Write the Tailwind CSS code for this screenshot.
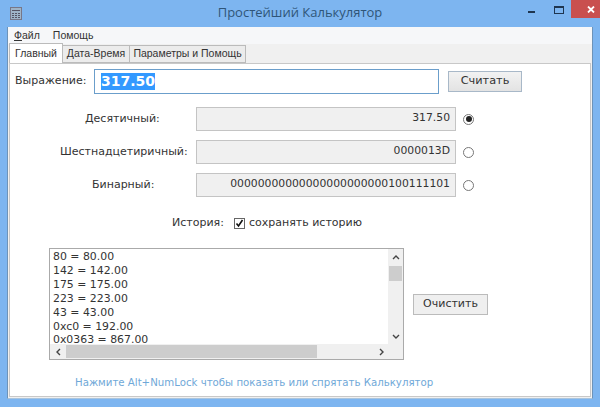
<!DOCTYPE html>
<html lang="en">
<head>
    <meta charset="UTF-8">
    <title>Простейший Калькулятор</title>
    <script src="https://cdn.jsdelivr.net/npm/@tailwindcss/browser@4"></script>
</head>
<body class="w-[600px] h-[407px] overflow-hidden bg-[#7db5f0] font-['DejaVu_Sans',sans-serif] text-[11px] text-[#333]">

    <!-- Title bar -->
    <div class="h-[27px] flex items-center relative">
        <svg class="ml-[10px] mb-[1px]" width="12" height="13" viewBox="0 0 12 13"><rect x="0.5" y="0.5" width="11" height="12" fill="#9fb4c8" stroke="#778"/><path d="M2 3h8v1H2zM2 6h2v1H2zM5 6h2v1H5zM8 6h2v1H8zM2 8h2v1H2zM5 8h2v1H5zM8 8h2v1H8zM2 10h2v1H2zM5 10h2v1H5zM8 10h2v1H8z" fill="#556"/></svg>
        <div class="flex-1 text-center text-[13px] text-[#2f5578] font-['Open_Sans',sans-serif] mr-[22px] mb-[1px]">Простейший Калькулятор</div>
        <div class="absolute top-0 left-[516px] flex items-start">
            <div class="w-[30px] h-[20px] flex justify-center"><div class="w-[7px] h-[2px] mt-[11px] bg-[#1e3550]"></div></div>
            <div class="w-[26px] h-[20px] flex justify-center"><div class="w-[10px] h-[8px] mt-[6px] border border-t-2 border-[#1e3550]"></div></div>
            <div class="w-[39px] h-[18px] bg-[#c9504f] flex items-center justify-center ml-[-1px]">
                <svg width="8" height="7" viewBox="0 0 8 7"><path d="M1 0.5L7 6.5M7 0.5L1 6.5" stroke="#fff" stroke-width="1.8"/></svg>
            </div>
        </div>
    </div>

    <!-- Window body -->
    <div class="mx-[7px] h-[372px] bg-[#f0f0f0] border border-[#6d93b8] border-t-0 border-b-[#a9c4dd] flex flex-col">
        <!-- Menu -->
        <div class="h-[17px] bg-[#f6f7f9] flex items-center gap-[13px] pl-[6px] text-[10.5px] font-['Liberation_Sans',sans-serif] shrink-0">
            <span><span class="underline">Ф</span>айл</span>
            <span>Помощь</span>
        </div>

        <!-- Tabs -->
        <div class="h-[19px] flex items-end pl-[1px] relative z-10 shrink-0 text-[10.5px] font-['Liberation_Sans',sans-serif]">
            <div class="w-[54px] h-[20px] bg-white border border-[#bbb] border-b-0 flex items-center justify-center">Главный</div>
            <div class="w-[67px] h-[18px] bg-[#ececec] border border-[#bbb] border-l-0 flex items-center justify-center">Дата-Время</div>
            <div class="w-[116px] h-[18px] bg-[#ececec] border border-[#bbb] border-l-0 flex items-center justify-center">Параметры и Помощь</div>
        </div>

        <!-- Tab page -->
        <div class="flex-1 mr-[1px] ml-[1px] mb-[1px] bg-white border border-[#c8c8c8] flex flex-col relative">
            <div class="flex items-center h-[25px] mt-[5px]">
                <span class="ml-[5px] w-[79px] text-[11px]">Выражение:</span>
                <div class="w-[345px] h-[25px] border border-[#6b9ecb] flex items-center pl-[6px] text-[14px] font-bold">
                    <span class="bg-[#3399ff] text-white h-[17px] leading-[17px]">317.50</span>
                </div>
                <div class="ml-[9px] w-[74px] h-[21px] bg-gradient-to-b from-[#f2f2f2] to-[#e3e3e3] border border-[#a8b8c8] flex items-center justify-center text-[11.3px]">Считать</div>
            </div>

            <div class="mt-[13px] flex flex-col gap-[9px]">
                <div class="flex items-center h-[24px]">
                    <span class="w-[159px] pl-[75px] whitespace-nowrap">Десятичный:</span>
                    <div class="ml-[27px] w-[260px] h-[24px] bg-[#f0f0f0] border border-[#c4c4c4] flex items-center justify-end pr-[5px] pb-[2px] text-[10.8px]">317.50</div>
                    <div class="ml-[7px] w-[11px] h-[11px] rounded-full border border-[#777] flex items-center justify-center"><div class="w-[6px] h-[6px] rounded-full bg-[#222]"></div></div>
                </div>
                <div class="flex items-center h-[24px]">
                    <span class="w-[159px] pl-[50px] whitespace-nowrap">Шестнадцетиричный:</span>
                    <div class="ml-[27px] w-[260px] h-[24px] bg-[#f0f0f0] border border-[#c4c4c4] flex items-center justify-end pr-[5px] pb-[2px] text-[10.8px]">0000013D</div>
                    <div class="ml-[7px] w-[11px] h-[11px] rounded-full border border-[#777]"></div>
                </div>
                <div class="flex items-center h-[24px]">
                    <span class="w-[159px] pl-[82px] whitespace-nowrap">Бинарный:</span>
                    <div class="ml-[27px] w-[260px] h-[24px] bg-[#f0f0f0] border border-[#c4c4c4] flex items-center justify-end pr-[5px] pb-[2px] text-[10.8px]">00000000000000000000000100111101</div>
                    <div class="ml-[7px] w-[11px] h-[11px] rounded-full border border-[#777]"></div>
                </div>
            </div>

            <div class="flex items-center h-[14px] mt-[19px]">
                <span class="ml-[162px] w-[53px]">История:</span>
                <div class="ml-[9px] w-[11px] h-[11px] border border-[#666] flex items-center justify-center">
                    <svg width="9" height="9" viewBox="0 0 9 9"><path d="M1.5 4.5L3.5 7L7.5 1" fill="none" stroke="#111" stroke-width="1.6"/></svg>
                </div>
                <span class="ml-[4px]">сохранять историю</span>
            </div>

            <div class="flex items-center mt-[18px] ml-[39px]">
                <!-- History list -->
                <div class="w-[355px] h-[112px] border border-[#aaa] relative overflow-hidden">
                    <div class="pl-[3px] pt-[1px] leading-[13.9px] text-[10.9px] text-[#333]">
                        <div>80 = 80.00</div>
                        <div>142 = 142.00</div>
                        <div>175 = 175.00</div>
                        <div>223 = 223.00</div>
                        <div>43 = 43.00</div>
                        <div>0xc0 = 192.00</div>
                        <div>0x0363 = 867.00</div>
                    </div>
                    <!-- Scrollbars -->
                    <div class="absolute top-0 right-0 w-[15px] h-[96px] bg-[#f0f0f0] flex flex-col items-center">
                        <svg class="mt-[6px]" width="8" height="5" viewBox="0 0 8 5"><path d="M1 4L4 1L7 4" fill="none" stroke="#444" stroke-width="1.4"/></svg>
                        <div class="w-[13px] h-[15px] mt-[6px] bg-[#cdcdcd]"></div>
                        <svg class="mt-auto mb-[6px]" width="8" height="5" viewBox="0 0 8 5"><path d="M1 1L4 4L7 1" fill="none" stroke="#444" stroke-width="1.4"/></svg>
                    </div>
                    <div class="absolute bottom-0 left-0 right-0 h-[15px] bg-[#f0f0f0] flex items-center">
                        <svg class="ml-[6px]" width="5" height="8" viewBox="0 0 5 8"><path d="M4 1L1 4L4 7" fill="none" stroke="#444" stroke-width="1.4"/></svg>
                        <div class="w-[251px] h-[13px] ml-[5px] bg-[#cdcdcd]"></div>
                        <svg class="ml-auto mr-[19px]" width="5" height="8" viewBox="0 0 5 8"><path d="M1 1L4 4L1 7" fill="none" stroke="#444" stroke-width="1.4"/></svg>
                    </div>
                </div>
                <div class="ml-[9px] w-[75px] h-[21px] bg-[#efefef] border border-[#bbb] flex items-center justify-center text-[11px]">Очистить</div>
            </div>

            <div class="mt-[15px] ml-[65px] text-[#6fa8d8] text-[10.2px]">Нажмите Alt+NumLock чтобы показать или спрятать Калькулятор</div>
        </div>
    </div>
</body>
</html>
